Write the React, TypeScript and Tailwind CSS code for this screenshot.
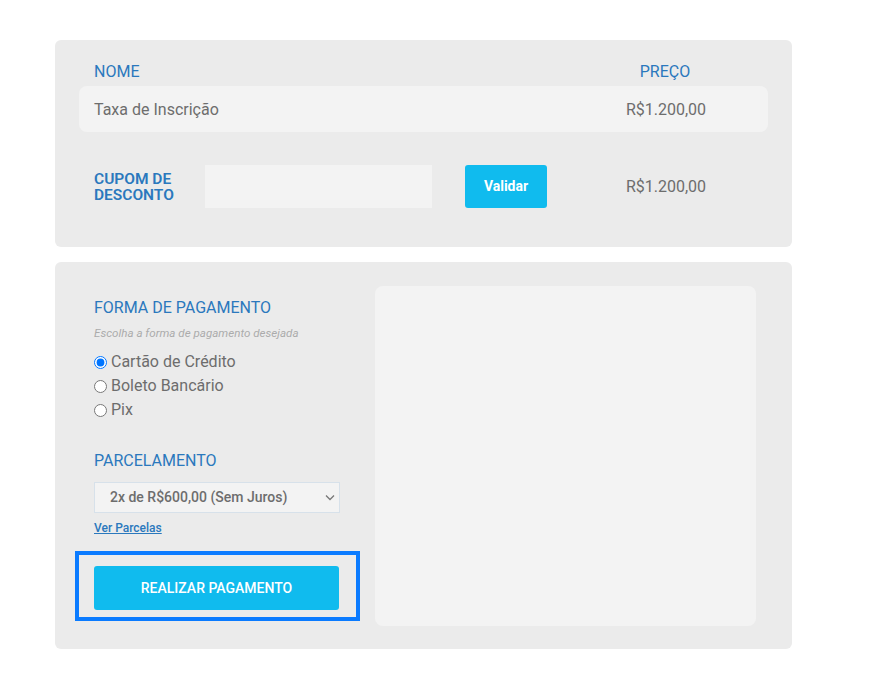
import { useState } from "react";

const heading = "text-[#2a78bd]";

export default function App() {
  const [method, setMethod] = useState("credito");
  const [coupon, setCoupon] = useState("");

  return (
    <div className="min-h-screen bg-white font-['Roboto',sans-serif]">
      <div className="ml-[55px] w-[737px] pt-[40px]">
        {/* resumo do pedido */}
        <div className="rounded-md bg-[#ebebeb] px-6 pt-[22px] pb-[39px]">
          <div className="flex pl-[15px] pr-[33px] text-[16px] leading-[20px]">
            <span className={heading}>NOME</span>
            <span className={`ml-auto w-[140px] text-center ${heading}`}>PREÇO</span>
          </div>
          <div className="mt-[4px] flex h-[46px] items-center rounded-lg bg-[#f3f3f3] pt-[2px] pl-[15px] pr-[32px] text-[16px] text-[#6d6d6d]">
            <span>Taxa de Inscrição</span>
            <span className="ml-auto w-[140px] text-center">R$1.200,00</span>
          </div>
          <div className="mt-[33px] flex h-[43px] items-center pl-[15px] pr-[32px]">
            <label
              htmlFor="cupom"
              className={`w-[111px] text-[15.5px] font-semibold leading-[16px] ${heading}`}
            >
              CUPOM DE
              <br />
              DESCONTO
            </label>
            <input
              id="cupom"
              value={coupon}
              onChange={(e) => setCoupon(e.target.value)}
              className="h-[43px] w-[227px] bg-[#f3f3f3] px-3 text-[15px] text-[#6d6d6d] outline-none"
            />
            <button className="ml-[33px] h-[43px] w-[82px] rounded-[3px] bg-[#10bbee] text-[14px] font-bold text-white">
              Validar
            </button>
            <span className="ml-auto w-[140px] text-center text-[16px] text-[#6d6d6d]">
              R$1.200,00
            </span>
          </div>
        </div>

        {/* pagamento */}
        <div className="mt-[15px] flex gap-[15px] rounded-md bg-[#ebebeb] pt-6 pb-[23px] pl-5 pr-9">
          <div className="w-[285px] self-start">
            <div className="px-[19px] pt-3">
              <h2 className={`text-[16px] leading-[20px] ${heading}`}>FORMA DE PAGAMENTO</h2>
              <p className="mt-2 text-[11.6px] italic leading-[15px] text-[#ababab]">
                Escolha a forma de pagamento desejada
              </p>
              <div className="mt-[9px] flex flex-col text-[16px] leading-[24px] text-[#6d6d6d]">
                {[
                  { id: "credito", label: "Cartão de Crédito" },
                  { id: "boleto", label: "Boleto Bancário" },
                  { id: "pix", label: "Pix" },
                ].map((opt) => (
                  <label key={opt.id} className="flex items-center gap-1">
                    <input
                      type="radio"
                      name="forma"
                      checked={method === opt.id}
                      onChange={() => setMethod(opt.id)}
                      className="h-[13px] w-[13px]"
                    />
                    {opt.label}
                  </label>
                ))}
              </div>
              <h2 className={`mt-[29px] text-[16px] leading-[20px] ${heading}`}>PARCELAMENTO</h2>
              <div className="relative mt-[11px] w-[246px]">
                <select className="h-[31px] w-full appearance-none border border-[#d7e1ea] bg-[#f3f3f3] pl-[15px] text-[14px] font-medium text-[#6d6d6d] outline-none">
                  <option>2x de R$600,00 (Sem Juros)</option>
                  <option>1x de R$1.200,00 (Sem Juros)</option>
                </select>
                <svg
                  className="pointer-events-none absolute right-[5px] top-[12px]"
                  width="10"
                  height="7"
                  viewBox="0 0 10 7"
                  fill="none"
                  stroke="#777"
                  strokeWidth="1.3"
                >
                  <path d="M1 1.5l4 4 4-4" />
                </svg>
              </div>
              <a
                href="#"
                className={`mt-[7px] block text-[12px] font-medium leading-[16px] underline ${heading}`}
              >
                Ver Parcelas
              </a>
            </div>
            <div className="mt-[15px] border-4 border-[#0a7bff] pl-[15px] pr-[17px] pt-[11px] pb-[7px]">
              <button className="h-[44px] w-full rounded-[3px] bg-[#10bbee] text-[14px] font-medium text-white">
                REALIZAR PAGAMENTO
              </button>
            </div>
          </div>
          <div className="h-[340px] flex-1 rounded-lg bg-[#f3f3f3]" />
        </div>
      </div>
    </div>
  );
}
